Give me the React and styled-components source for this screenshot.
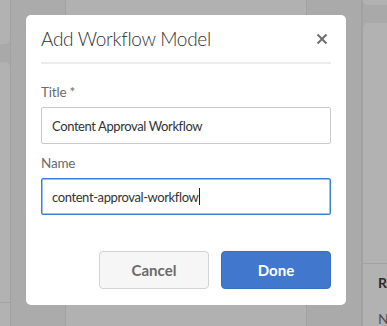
import React from "react";
import styled, { createGlobalStyle } from "styled-components";

const Global = createGlobalStyle`
  html, body { margin: 0; padding: 0; }
  body {
    width: 387px;
    height: 326px;
    overflow: hidden;
    background: #a9a9a9;
    font-family: Lato, "Open Sans", sans-serif;
  }
`;

const Page = styled.div`
  display: flex;
  height: 326px;
  width: 387px;
  overflow: hidden;
`;

const CardColumn = styled.div`
  width: ${(p) => p.$w}px;
  flex: none;
  display: flex;
  flex-direction: column;
  gap: 18px;
  background: #a9a9a9;
  border-${(p) => (p.$side === "left" ? "right" : "left")}: 1px solid #a1a1a1;
  overflow: hidden;
`;

const Card = styled.div`
  background: #b2b2b2;
  height: ${(p) => (p.$h ? `${p.$h}px` : "auto")};
  flex: ${(p) => (p.$h ? "none" : "1")};
  border-radius: ${(p) => p.$radius};
  display: flex;
  flex-direction: column;
`;

const CardSection = styled.div`
  height: ${(p) => p.$h}px;
  flex: none;
  border-bottom: 1px solid #a3a3a3;
`;

const CardBody = styled.div`
  padding: 10px 0 0 15px;
  display: flex;
  flex-direction: column;
  gap: 19px;
  font-size: 14px;
  line-height: 17px;
  white-space: nowrap;
`;

const CardHeading = styled.div`
  font-weight: 700;
  color: #2c2c2c;
`;

const CardText = styled.div`
  color: #4e4e4e;
`;

const Column = styled.div`
  width: ${(p) => p.$w}px;
  flex: none;
  background: ${(p) => p.$bg};
  border-right: 1px solid #a2a2a2;
`;

const Overlay = styled.div`
  position: fixed;
  inset: 0;
  padding: 15px 0 0 26px;
  display: flex;
  align-items: flex-start;
`;

const Dialog = styled.div`
  width: 320px;
  height: 290px;
  box-sizing: border-box;
  background: #fff;
  border-radius: 5px;
  padding: 0 15px;
  display: flex;
  flex-direction: column;
`;

const Header = styled.div`
  display: flex;
  align-items: center;
  justify-content: space-between;
  height: 47px;
  border-bottom: 2px solid #ececec;
`;

const Title = styled.h2`
  margin: 0;
  font-size: 19px;
  font-weight: 300;
  color: #2f2f2f;
  letter-spacing: -0.3px;
`;

const Close = styled.button`
  border: 0;
  background: none;
  padding: 0;
  width: 12px;
  height: 12px;
  margin-right: 3px;
  display: flex;
  cursor: pointer;
`;

const Field = styled.div`
  display: flex;
  flex-direction: column;
  margin-top: ${(p) => p.$mt}px;
`;

const Label = styled.label`
  font-size: 13.5px;
  letter-spacing: -0.2px;
  color: #6b6b6b;
  line-height: 18px;
  margin-bottom: 6px;
`;

const Input = styled.div`
  height: 37px;
  box-sizing: border-box;
  border: 1px solid ${(p) => (p.$focused ? "#3b7fd6" : "#cacaca")};
  box-shadow: ${(p) => (p.$focused ? "inset 0 0 0 0.5px #3b7fd6" : "none")};
  border-radius: 2px;
  padding: 0 10px;
  display: flex;
  align-items: center;
  font-size: 13px;
  letter-spacing: -0.4px;
  color: #333;
`;

const Caret = styled.span`
  display: inline-block;
  width: 1px;
  height: 17px;
  background: #222;
  margin-left: 1px;
`;

const Actions = styled.div`
  display: flex;
  justify-content: flex-end;
  gap: 12px;
  margin-top: 36px;
`;

const Button = styled.button`
  width: 110px;
  height: 38px;
  box-sizing: border-box;
  border-radius: 4px;
  font-family: Lato, "Open Sans", sans-serif;
  font-size: 15px;
  font-weight: 700;
  border: 1px solid ${(p) => (p.$primary ? "#3a70c4" : "#d3d3d3")};
  background: ${(p) => (p.$primary ? "#4178cd" : "#f6f6f6")};
  color: ${(p) => (p.$primary ? "#fff" : "#6b6b6b")};
`;

export default function App() {
  return (
    <>
      <Global />
      <Page>
        <CardColumn $w={10} $side="left">
          <Card $h={44} $radius="0 0 5px 0" />
          <Card $radius="0 5px 0 0">
            <CardSection $h={240} />
          </Card>
        </CardColumn>
        <Column $w={54} $bg="#ababab" />
        <Column $w={240} $bg="#b1b1b1" />
        <Column $w={54} $bg="#aaaaaa" />
        <CardColumn $w={24} $side="right">
          <Card $h={5} $radius="0 0 0 5px" />
          <Card $radius="5px 0 0 0">
            <CardSection $h={240} />
            <CardBody>
              <CardHeading>Re</CardHeading>
              <CardText>Ne</CardText>
            </CardBody>
          </Card>
        </CardColumn>
      </Page>
      <Overlay>
        <Dialog>
          <Header>
            <Title>Add Workflow Model</Title>
            <Close aria-label="Close">
              <svg width="12" height="12" viewBox="0 0 12 12">
                <path d="M1.5 1.5 L10.5 10.5 M10.5 1.5 L1.5 10.5" stroke="#6e6e6e" strokeWidth="2" strokeLinecap="butt" />
              </svg>
            </Close>
          </Header>
          <Field $mt={19}>
            <Label>Title *</Label>
            <Input>Content Approval Workflow</Input>
          </Field>
          <Field $mt={10}>
            <Label>Name</Label>
            <Input $focused>
              content-approval-workflow
              <Caret />
            </Input>
          </Field>
          <Actions>
            <Button>Cancel</Button>
            <Button $primary>Done</Button>
          </Actions>
        </Dialog>
      </Overlay>
    </>
  );
}
